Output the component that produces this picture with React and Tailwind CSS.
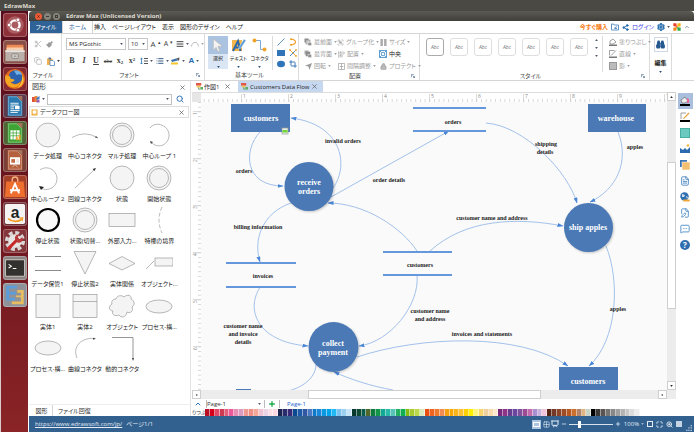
import React from "react";
import { Scissors, Paintbrush, Search, Crop, Lock, Copy, Settings, Share2, AlignJustify, List, FileText, MessageSquareMore, FilePen, Group, AlignStartVertical, Binoculars, ChevronUp, Plus, Minus, Maximize, ZoomIn, Grid2x2, Presentation } from "lucide-react";

function Caret({ className = "text-gray-600" }) {
  return (
    <svg viewBox="0 0 4 3" className={`h-[2px] w-[3px] shrink-0 ${className}`} aria-hidden="true">
      <path d="M0 0h4L2 3z" fill="currentColor" />
    </svg>
  );
}

function Close() {
  return (
    <svg viewBox="0 0 6 6" className="size-[5px]" aria-hidden="true">
      <path d="M.5.5l5 5M5.5.5l-5 5" stroke="#555" strokeWidth=".8" />
    </svg>
  );
}

/* ---------- launcher ---------- */

const tile = "flex size-6 shrink-0 items-center justify-center rounded-[3px] border border-white/25 overflow-hidden";

function DocIcon({ color, children }) {
  return (
    <svg viewBox="0 0 24 24" className="size-[22px]">
      <path d="M4 1h10l6 6v16H4z" fill={color} />
      <path d="M5 2h9l5 5v15H5z" fill="none" stroke="#fff" strokeOpacity=".5" strokeWidth=".7" />
      <path d="M14 1h6v6z" fill="#a9745c" />
      {children}
    </svg>
  );
}

const launcher = [
  ["Dash", "bg-[#8d3038]", (
    <svg viewBox="0 0 24 24" className="size-[22px]">
      <circle cx="12" cy="12" r="9.5" fill="#c8878a" fillOpacity=".5" />
      <circle cx="12" cy="12" r="5" fill="none" stroke="#fff" strokeWidth="2.6" />
      <g fill="#fff" stroke="#a5555a" strokeWidth=".8">
        <circle cx="5.6" cy="12" r="2" />
        <circle cx="15.2" cy="6.4" r="2" />
        <circle cx="15.2" cy="17.6" r="2" />
      </g>
    </svg>
  )],
  ["Files", "bg-[#8a5048]", (
    <svg viewBox="0 0 24 24" className="size-[22px]">
      <path d="M3 4h18l1 8H2z" fill="#ee8a52" />
      <path d="M3 7h18v5H3z" fill="#f6cfae" />
      <path d="M1.500 10h21v12h-21z" fill="#b9b1aa" />
      <path d="M1.500 10h21v2h-21z" fill="#e8e3de" />
      <rect x="8.500" y="14" width="7" height="5" rx="1" fill="#d8d3ce" stroke="#7c756f" strokeWidth=".8" />
      <path d="M10.500 16.500h3" stroke="#777" />
    </svg>
  )],
  ["Firefox", "bg-[#842a30]", (
    <svg viewBox="0 0 24 24" className="size-[22px]">
      <circle cx="12" cy="12" r="11" fill="#e66a1c" />
      <circle cx="12.500" cy="10" r="7.500" fill="#2c62ae" />
      <path d="M11 3c4-1 8 1 9 5-3-2-5-1-6 0-1-2-2-3-3-5z" fill="#6fb1e6" />
      <path d="M2 7c1 1 2 2 5 2-1 2 0 3 2 3 2 0 3 1 2 2-2 2-3 1-4 1 2 4 8 4 10 0 1 5-6 8-11 5C2 18 0 12 2 7z" fill="#f5a623" />
      <path d="M20 8c3 5 1 12-6 14 5-4 6-8 6-14z" fill="#f8c93c" />
    </svg>
  )],
  ["Writer", "bg-[#5d3a4c]", (
    <DocIcon color="#2a7ab0">
      <path d="M7 9h9M7 11h9M7 17h10M7 19h8" stroke="#fff" />
      <rect x="12" y="12" width="5" height="3.500" fill="#fff" />
      <path d="M7 13h4M7 15h4" stroke="#fff" />
    </DocIcon>
  )],
  ["Calc", "bg-[#536338]", (
    <DocIcon color="#3ea535">
      <rect x="7" y="9" width="10" height="10" fill="#fff" />
      <path d="M7 12h10M7 15h10M10 9v10M13.500 9v10" stroke="#3ea535" strokeWidth=".8" />
      <path d="M13 20v-4h2v4zM16 20v-6h2v6z" fill="#f0a030" />
    </DocIcon>
  )],
  ["Impress", "bg-[#7a3f36]", (
    <DocIcon color="#b5603d">
      <rect x="6.500" y="9" width="11" height="8" fill="#fff" />
      <rect x="8" y="11" width="4" height="4" fill="#c36b46" />
      <path d="M13.500 12h3M13.500 14h3M9 20l3-3 3 3" stroke="#e9c8b8" fill="none" />
    </DocIcon>
  )],
  ["Software", "bg-[#a13f28]", (
    <svg viewBox="0 0 24 24" className="size-[22px]">
      <path d="M9 7V4a3 3 0 016 0v3" fill="none" stroke="#f6b183" strokeWidth="1.600" />
      <path d="M2.500 6h19l1.500 17H1z" fill="#ee6e30" />
      <path d="M7.500 19L12 8.500 16.500 19M6.500 15.500h11" fill="none" stroke="#fff" strokeWidth="2" />
    </svg>
  )],
  ["Amazon", "bg-[#713038]", (
    <svg viewBox="0 0 24 24" className="size-[22px]">
      <rect x="1" y="1" width="22" height="22" rx="2" fill="#f4f3f1" />
      <text x="12" y="16" textAnchor="middle" fontSize="17" fontWeight="700" fontFamily="Liberation Sans, sans-serif" fill="#222">a</text>
      <path d="M4.500 17c5 4 11 4 15 .5" fill="none" stroke="#f39a1f" strokeWidth="1.800" />
      <path d="M17 16.500l3.500-.2-.8 3.500" fill="none" stroke="#f39a1f" strokeWidth="1.200" />
    </svg>
  )],
  ["System settings", "bg-[#84363a]", (
    <svg viewBox="0 0 24 24" className="size-[22px]">
      <circle cx="12" cy="12" r="9" fill="none" stroke="#d9d7d5" strokeWidth="4" strokeDasharray="4.200 2.860" />
      <circle cx="12" cy="12" r="7.500" fill="#e6e4e2" />
      <path d="M5 20l8-8" stroke="#c9282a" strokeWidth="3.400" strokeLinecap="round" />
      <path d="M12 10a4 4 0 015-5l-2 3 2 2 3-2a4 4 0 01-6 5z" fill="#b9383a" />
    </svg>
  )],
  ["Terminal", "bg-[#8d8584]", (
    <svg viewBox="0 0 24 24" className="size-[22px]">
      <rect x="1.500" y="3" width="21" height="18" rx="1" fill="#34322f" stroke="#c9c5c0" strokeWidth="1.200" />
      <path d="M5 8l3 2-3 2M9.500 12.500h4" fill="none" stroke="#fff" strokeWidth="1.200" />
    </svg>
  )],
  ["Edraw", "bg-[#8f9298]", (
    <svg viewBox="0 0 24 24" className="size-[22px]">
      <path d="M14 3.500H4v13h8M4 10h9" fill="none" stroke="#5b9ddb" strokeWidth="3" />
      <path d="M14.500 8H20v12.500H8.500" fill="none" stroke="#e8bd62" strokeWidth="3" />
      <path d="M13 13.500h6" fill="none" stroke="#e8bd62" strokeWidth="2" />
    </svg>
  )],
];

function Launcher() {
  return (
    <nav aria-label="Launcher" className="flex w-7 shrink-0 flex-col items-center gap-[3px] border-l border-[#d8cccc] bg-linear-to-b from-[#560d1c] via-[#6d1720] to-[#8a2426] pt-0.5">
      {launcher.map(([name, bg, icon]) => (
        <button key={name} aria-label={name} className={`${tile} ${bg}`}>{icon}</button>
      ))}
    </nav>
  );
}

/* ---------- menu ---------- */

function MenuBar() {
  return (
    <div className="flex h-3 shrink-0 items-stretch bg-white pl-px text-[#222]">
      <button className="w-8 bg-[#2f6296] text-white">ファイル</button>
      <button className="w-[31px] border-x border-[#d5d5d5] text-[#2f6296]">ホーム</button>
      <div className="flex items-center gap-[6px] pl-px">
        {["挿入", "ページレイアウト", "表示", "図形のデザイン", "ヘルプ"].map((t) => (
          <button key={t}>{t}</button>
        ))}
      </div>
      <div className="ml-auto flex items-center gap-[3px] pr-1">
        <a href="#buy" className="font-bold text-[#f57a14]">今すぐ購入</a>
        <button aria-label="Export">
          <svg viewBox="0 0 8 8" className="size-2" fill="none" stroke="#3a7ab8" strokeWidth=".8">
            <path d="M.5 1h2l.7 1H7.500v5h-7zM3 5.500l3-2M4 5.500h2" />
          </svg>
        </button>
        <button aria-label="Share"><Share2 className="size-[7px] fill-[#2b70b0] text-[#2b70b0]" strokeWidth={3} /></button>
        <a href="#login" className="text-[#3c3ce0]">ログイン</a>
        <button aria-label="Options" className="flex items-center gap-0.5">
          <Settings className="size-2 text-[#2b70b0]" strokeWidth={4} />
          <Caret />
        </button>
        <button aria-label="Theme">
          <svg viewBox="0 0 8 8" className="size-2">
            <path d="M.3.300h3L4 4 .3 3z" fill="#e8402f" />
            <path d="M7.700.300v3L4 4 4.700.3z" fill="#f4b41c" />
            <path d="M7.700 7.700h-3L4 4l3.700.7z" fill="#2fa84c" />
            <path d="M.3 7.700v-3L4 4l-.7 3.700z" fill="#f08a1c" />
          </svg>
        </button>
        <button aria-label="Collapse ribbon"><ChevronUp className="size-[6px] text-gray-500" strokeWidth={3} /></button>
      </div>
    </div>
  );
}

/* ---------- ribbon ---------- */

function Section({ label, width, launch, children }) {
  return (
    <section className={`flex shrink-0 flex-col border-r border-[#dcdcdc] ${width}`}>
      <div className="flex flex-1 items-start pt-0.5">{children}</div>
      <div className="flex h-[10px] items-center pr-1 text-[#444]">
        <span className="flex-1 text-center">{label}</span>
        {launch && (
          <button aria-label={`${label}の設定`}>
            <svg viewBox="0 0 5 5" className="size-1" fill="none" stroke="#46678a" strokeWidth=".8"><path d="M.5 4V.500h3M2 2l2.500 2.500M4.500 2.500v2h-2" /></svg>
          </button>
        )}
      </div>
    </section>
  );
}

function FontPicker({ label, width, options }) {
  return (
    <div className={`relative ${width}`}>
      <select aria-label={label} className="block h-3 w-full appearance-none border border-[#c6c6c6] bg-white pl-0.5 text-[6px] leading-[10px] text-[#222]">
        {options.map((o) => <option key={o}>{o}</option>)}
      </select>
      <span className="pointer-events-none absolute right-[3px] top-[5px] flex"><Caret /></span>
    </div>
  );
}

function StackIcon({ filled }) {
  return (
    <svg viewBox="0 0 8 8" className="size-2">
      <rect x=".5" y=".5" width="4" height="4" fill={filled ? "#aaa" : "#8d8d8d"} />
      <rect x="2" y="2" width="4" height="4" fill={filled ? "#8d8d8d" : "#ccc"} stroke="#8d8d8d" strokeWidth=".6" />
      <rect x="4" y="4.500" width="3.500" height="3" fill="#8d8d8d" stroke="#fff" strokeWidth=".4" />
    </svg>
  );
}

function Row({ icon, label, caret = true, className = "text-[#9a9a9a]" }) {
  return (
    <button className={`flex h-3 items-center gap-0.5 whitespace-nowrap ${className}`}>
      <span className="flex w-2 justify-center">{icon}</span>
      <span>{label}</span>
      {caret && <Caret className="text-[#a0a0a0]" />}
    </button>
  );
}

function BigTool({ label, active, children }) {
  return (
    <button className={`flex h-[33px] flex-col items-center ${active ? "w-5 bg-[#dbe6f4]" : "w-[21px]"}`}>
      <span className={`flex h-[18px] w-full items-center justify-center ${active ? "bg-[#a9c3e0]" : ""}`}>{children}</span>
      <span className="whitespace-nowrap text-[5px] leading-2 text-[#222]">{label}</span>
      <span className="flex pt-1"><Caret className="text-[#2b4d78]" /></span>
    </button>
  );
}

function FileGroup() {
  return (
    <Section label="ファイル" width="w-[33px]">
      <div className="grid grid-cols-[12px_14px] items-center gap-y-[5px] pl-[5px] pt-0.5">
        <button aria-label="切り取り" className="flex h-3 items-center"><Scissors className="size-2 text-[#aaa]" /></button>
        <button aria-label="書式コピー" className="flex h-3 items-center"><Paintbrush className="size-[7px] fill-[#999] text-[#999]" /></button>
        <button aria-label="コピー" className="flex h-3 items-center"><Copy className="size-2 text-[#aaa]" /></button>
        <button aria-label="貼り付け" className="flex h-3 items-center gap-0.5">
          <svg viewBox="0 0 9 9" className="size-[9px]">
            <rect x="1" y="1.500" width="5.500" height="6.500" fill="#f3b24f" /><rect x="2.500" y=".5" width="2.500" height="2" fill="#58779c" />
            <path d="M4 3.500h3l1.500 1.500v3.500H4z" fill="#fff" stroke="#3a78b8" strokeWidth=".7" />
          </svg>
          <Caret className="text-[#333]" />
        </button>
      </div>
    </Section>
  );
}

function FontGroup() {
  const cell = "flex h-3 items-center justify-center gap-0.5";
  return (
    <Section label="フォント" width="w-[143px]" launch>
      <div className="flex w-full flex-col gap-[5px] pl-1 pt-0.5">
        <div className="flex items-center gap-0.5">
          <FontPicker label="フォント" width="w-[60px]" options={["MS PGothic", "Arial"]} />
          <FontPicker label="サイズ" width="w-5" options={["10", "12"]} />
          <button aria-label="拡大" className={`${cell} w-[11px] text-[8px] text-[#444]`}>A<sup className="text-[5px]">▴</sup></button>
          <button aria-label="縮小" className={`${cell} w-[11px] text-[7px] text-[#444]`}>A<sup className="text-[5px]">▾</sup></button>
          <button aria-label="配置" className={`${cell} w-[13px]`}><AlignJustify className="size-2 text-[#444]" strokeWidth={3} /><Caret /></button>
          <button aria-label="円弧" className={`${cell} w-[13px]`}>
            <svg viewBox="0 0 8 6" className="h-[6px] w-2"><path d="M.5 5.500C1 0 7 0 7.500 5.500" fill="none" stroke="#aaa" strokeWidth=".8" /></svg>
            <Caret className="text-[#aaa]" />
          </button>
        </div>
        <div className="flex items-center font-['Liberation_Serif',serif] text-[8px] text-[#444]">
          <button className={`${cell} w-3 font-bold`}>B</button>
          <button className={`${cell} w-3 font-bold italic`}>I</button>
          <button className={`${cell} w-3 font-bold underline`}>U</button>
          <button className={`${cell} w-3 text-[6px] line-through`}>abc</button>
          <button className={`${cell} w-3 font-bold`}><span className="leading-2">x<sub className="text-[5px]">2</sub></span></button>
          <button className={`${cell} w-3 font-bold`}><span className="leading-2">x<sup className="text-[5px]">2</sup></span></button>
          <button aria-label="行間" className={`${cell} w-4`}>
            <svg viewBox="0 0 8 8" className="size-2"><path d="M1.500 1v6M.3 2.200L1.500 1l1.200 1.200M.3 5.800L1.500 7l1.200-1.200" fill="none" stroke="#2f76b8" strokeWidth=".8" /><path d="M4 1.500h4M4 4h4M4 6.500h4" stroke="#555" /></svg>
            <Caret />
          </button>
          <button aria-label="箇条書き" className={`${cell} w-4`}><List className="size-2 text-[#3a5d86]" strokeWidth={3} /><Caret /></button>
          <button aria-label="蛍光ペン" className={`${cell} w-4`}>
            <svg viewBox="0 0 9 8" className="h-2 w-[9px]"><path d="M0 3l5-1.500 2 2L1 5z" fill="#3c74ad" /><path d="M5 1.500L8.500.5 8 4z" fill="#555" /><path d="M0 5.500h7v2H0z" fill="#f5c62c" /></svg>
            <Caret />
          </button>
          <button aria-label="文字色" className={`${cell} w-4 font-['Liberation_Sans',sans-serif] font-bold text-[#2a6bb0]`}>A<Caret /></button>
        </div>
      </div>
    </Section>
  );
}

function ToolGroup() {
  return (
    <Section label="基本ツール" width="w-[94px]">
      <div className="flex pl-[3px]">
        <BigTool label="選択" active>
          <svg viewBox="0 0 12 16" className="h-[15px] w-3"><path d="M1 1v12l3-3 2 5 2-1-2-5h5z" fill="#f2f2f2" stroke="#b9b9b9" strokeWidth=".8" /></svg>
        </BigTool>
        <BigTool label="テキスト">
          <svg viewBox="0 0 15 14" className="h-[14px] w-[15px]">
            <rect x="1" y="2" width="10" height="11" fill="#f2b64c" />
            <path d="M2 13L7 3l2.500 10M4 9.500h4.500" fill="none" stroke="#2d6aa8" strokeWidth="2" />
            <path d="M8 9l5-8 2 1.500-5 7.500-2.500 1z" fill="#5b9bd5" stroke="#fff" strokeWidth=".4" />
          </svg>
        </BigTool>
        <BigTool label="コネクタ">
          <svg viewBox="0 0 15 14" className="h-[14px] w-[15px]">
            <path d="M2.500 2.500h6v9h4" fill="none" stroke="#7aa7d9" />
            <circle cx="2.500" cy="2.500" r="2" fill="#f2a32b" /><circle cx="12.500" cy="11.500" r="2" fill="#f2a32b" />
          </svg>
        </BigTool>
      </div>
      <div className="ml-0.5 grid h-[34px] grid-cols-2 items-center gap-x-1 border-l border-[#dcdcdc] pl-[4px]">
        <button aria-label="線"><svg viewBox="0 0 8 8" className="size-2"><path d="M.5 7.500l7-7" stroke="#4a87c4" strokeWidth=".9" /></svg></button>
        <button aria-label="円弧"><svg viewBox="0 0 8 8" className="size-2"><path d="M2 1c6 1 6 5 0 6" fill="none" stroke="#f0a02a" strokeWidth="1.200" /><circle cx="2" cy="1.200" r="1" fill="#f0a02a" /><circle cx="2" cy="6.800" r="1" fill="#f0a02a" /></svg></button>
        <button aria-label="長方形"><svg viewBox="0 0 8 8" className="size-2"><rect y="1" width="8" height="6" fill="#2f74b8" /></svg></button>
        <button aria-label="接続点"><svg viewBox="0 0 8 8" className="size-2"><path d="M1 1l6 6" stroke="#f0a02a" /><path d="M7 1L1 7" stroke="#4a87c4" /><circle cx="1" cy="1" r=".9" fill="#f0a02a" /><circle cx="7" cy="7" r=".9" fill="#f0a02a" /><circle cx="7" cy="1" r=".9" fill="#f0a02a" /></svg></button>
        <button aria-label="楕円"><svg viewBox="0 0 8 8" className="size-2"><ellipse cx="4" cy="4" rx="4" ry="3.200" fill="#2f74b8" /></svg></button>
        <button aria-label="トリミング"><Crop className="size-2 text-[#3a78b8]" strokeWidth={3} /></button>
      </div>
    </Section>
  );
}

function ArrangeGroup() {
  const s = "size-[7px]";
  return (
    <Section label="配置" width="w-[121px]" launch>
      <div className="flex w-full pl-[5px]">
        <div className="flex w-9 flex-col">
          <Row icon={<StackIcon />} label="最前面" />
          <Row icon={<StackIcon filled />} label="最背面" />
          <Row icon={<svg viewBox="0 0 8 8" className={s}><path d="M0 3l8-3-3 8-1-4z" fill="#999" /></svg>} label="回転" />
        </div>
        <div className="flex w-[42px] flex-col">
          <Row icon={<Group className={s} />} label="グループ化" />
          <Row icon={<AlignStartVertical className={s} />} label="配置" />
          <Row icon={<svg viewBox="0 0 8 8" className={s} fill="none" stroke="#999" strokeWidth=".8"><path d="M.5.500h7v7h-7zM4 .5v7M2 4h4" /></svg>} label="間隔調整" />
        </div>
        <div className="flex flex-col">
          <Row icon={<svg viewBox="0 0 8 8" className={s}><path d="M.5 0h2.800v8H.500zM4.700 0h2.800v8H4.700z" fill="#aaa" /></svg>} label="サイズ" />
          <Row className="text-[#222]" caret={false} icon={<svg viewBox="0 0 8 8" className="size-2" fill="none" stroke="#3a86c8" strokeWidth=".8"><path d="M.5.500h7v7h-7z" /><circle cx="4" cy="4" r="1.800" /><path d="M.5.500l2 2M7.500.500l-2 2M.5 7.500l2-2M7.500 7.500l-2-2" /></svg>} label="中央" />
          <Row icon={<Lock className="size-[7px] fill-[#bbb]" />} label="プロテクト" />
        </div>
      </div>
    </Section>
  );
}

function StyleGroup() {
  return (
    <Section label="スタイル" width="w-[230px]" launch>
      <div className="flex gap-[6px] pl-[6px] pt-0.5">
        {[0, 1, 2, 3, 4, 5, 6].map((i) => (
          <button key={i} className={`size-[18px] rounded-[3px] border bg-white text-[5px] italic text-[#777] ${i === 0 ? "border-[#aaa]" : "border-[#dedede]"}`}>Abc</button>
        ))}
      </div>
      <div className="flex h-6 flex-col items-center justify-around pl-[7px]">
        <button aria-label="前へ" className="flex rotate-180"><Caret /></button>
        <button aria-label="次へ" className="flex"><Caret /></button>
        <button aria-label="その他" className="flex"><Caret /></button>
      </div>
      <div className="ml-1 flex flex-col border-l border-[#dcdcdc] pl-[6px]">
        <Row icon={<svg viewBox="0 0 8 8" className="size-2"><path d="M1 3l3-2 3 3-3 2H1z" fill="none" stroke="#888" strokeWidth=".8" /><path d="M0 6.500h8v1.500H0z" fill="#777" /></svg>} label="塗りつぶし" />
        <Row icon={<svg viewBox="0 0 8 8" className="size-2"><path d="M.5.500h5M.5.500v5M2 5.500L7 .5" fill="none" stroke="#888" strokeWidth=".8" /><path d="M0 6.500h8v1.500H0z" fill="#777" /></svg>} label="直線" />
        <Row icon={<svg viewBox="0 0 8 8" className="size-2"><rect x=".5" y=".5" width="7" height="7" fill="#bbb" stroke="#999" /></svg>} label="影" />
      </div>
    </Section>
  );
}

function Ribbon() {
  return (
    <div className="flex h-12 shrink-0 border-y border-[#d5d5d5] bg-white">
      <FileGroup />
      <FontGroup />
      <ToolGroup />
      <ArrangeGroup />
      <StyleGroup />
      <div className="flex w-[22px] shrink-0 flex-col items-center border-r border-[#dcdcdc] pt-[3px]">
        <button className="flex flex-col items-center font-bold text-[#222]">
          <span className="flex h-[15px] w-[14px] items-center justify-center border border-[#d0d8e4]">
            <Binoculars className="size-[9px] fill-[#24588f] text-[#24588f]" strokeWidth={3} />
          </span>
          <span className="pt-[7px] leading-2">編集</span>
          <span className="flex pt-1"><Caret className="text-[#2b4d78]" /></span>
        </button>
      </div>
    </div>
  );
}

/* ---------- shape library ---------- */

const g = { fill: "#f4f4f4", stroke: "#8a8a8a", strokeWidth: 0.6 };
const n = { fill: "none", stroke: "#8a8a8a", strokeWidth: 0.6 };
const shapes = [
  ["データ処理", <circle cx="14" cy="13" r="12" {...g} />],
  ["中心コネクタ", <g><path d="M1 15.500Q14 8 27 16" {...n} /><path d="M27 16l-3-.5 1-1.500z" fill="#444" /></g>],
  ["マルチ処理", <g><circle cx="14" cy="13" r="12" {...g} /><circle cx="14" cy="13" r="9.500" {...g} /></g>],
  ["中心ループ 1", <g><path d="M5 6C11-2 25 4 24 14 23 24 12 27 6 20" {...n} /><path d="M5 19l3 1-2 2z" fill="#444" /></g>],
  ["中心ループ 2", <g><path d="M6 5c6-5 17-1 17 9 0 9-11 13-16 9" {...n} /><path d="M5 21l5 1-3 3z" fill="#222" /></g>],
  ["回線コネクタ", <g><path d="M4 23L24 4" {...n} /><path d="M25 3l-3.500 1 2 2z" fill="#333" /></g>],
  ["状態", <circle cx="14" cy="13" r="12" {...g} />],
  ["開始状態", <g><circle cx="14" cy="13" r="12" {...g} /><circle cx="14" cy="13" r="9.500" {...g} /></g>],
  ["停止状態", <circle cx="14" cy="13" r="11" fill="#f8f8f8" stroke="#000" strokeWidth="2.200" />],
  ["状態(切替...", <g><circle cx="14" cy="13" r="12" {...g} /><circle cx="14" cy="13" r="9.500" {...g} /></g>],
  ["外部入力...", <rect x="1" y="6.500" width="26" height="13" {...g} />],
  ["特権の境界", <path d="M17 0q-6 13 0 26" {...n} strokeDasharray="4 2" />],
  ["データ保管1", <path d="M1 6.500h26M1 20.500h26" {...n} strokeWidth="1" />],
  ["停止状態2", <path d="M3 1.500h22L14 24z" {...g} />],
  ["実体関係", <path d="M14 6.500L27 13.500 14 20 1 13.500z" {...g} />],
  ["オブジェクト...", <g><path d="M1 19l8-8" {...n} /><rect x="10" y="8" width="18" height="8" {...g} /></g>],
  ["実体1", <rect x="2" y="1.500" width="24" height="23" {...g} />],
  ["実体2", <g><rect x="2" y="1.500" width="24" height="23" {...g} /><path d="M2 8.500h24" {...n} /></g>],
  ["オブジェクト", <path d="M8 6c1-4 6-4 8-2 3-3 8-2 7 2 4 2 4 6 1 8 2 4-2 7-5 5-1 6-6 6-8 3-4 2-8-1-6-4-4 0-5-5-1-7-1-3 1-5 4-5z" {...g} />],
  ["プロセス-構...", <ellipse cx="14" cy="13.500" rx="13" ry="6.500" {...g} />],
  ["プロセス-構...", <ellipse cx="14" cy="13" rx="13" ry="7" {...g} />],
  ["曲線コネクタ", <g><path d="M6 23C1 11 11 2 24 3.500" {...n} /><path d="M25 3.700l-3-1v2z" fill="#444" /></g>],
  ["動的コネクタ", <g><path d="M4 2.500h21v22" {...n} strokeWidth=".9" /><path d="M25 26l-1-3h2z" fill="#444" /></g>],
];

function ShapePanel() {
  return (
    <aside className="flex w-[162px] shrink-0 flex-col border-r border-[#e2e2e2] bg-white text-[#333]">
      <div className="flex h-3 shrink-0 items-center justify-between pl-[3px] pr-[5px] text-[7px]">
        <h2>図形</h2>
        <button aria-label="閉じる"><Close /></button>
      </div>
      <div className="flex h-3 shrink-0 items-center gap-0.5 pl-[3px] pr-1">
        <button aria-label="ライブラリ" className="flex w-[13px] items-center gap-0.5">
          <svg viewBox="0 0 8 8" className="size-2"><path d="M0 2h3v5H0z" fill="#e2503b" /><path d="M2.500 1h3v6h-3z" fill="#e98a3b" /><path d="M4.500 3L7.500 1v3L4.500 5z" fill="#3a78c8" /><path d="M4.500 5.500l3-1v3h-3z" fill="#9a59b0" /></svg>
          <Caret />
        </button>
        <div className="relative flex-1">
          <input aria-label="図形の検索" className="block h-[11px] w-full border border-[#c2c2c2] px-0.5 text-[6px]" />
          <span className="pointer-events-none absolute right-[3px] top-1 flex"><Caret /></span>
        </div>
        <button aria-label="検索" className="flex w-3 justify-center"><Search className="size-2 text-[#3a78b8]" strokeWidth={3} /></button>
      </div>
      <div className="mr-px mt-px flex h-3 shrink-0 items-center gap-0.5 border border-[#dedede] pl-px pr-1">
        <svg viewBox="0 0 8 8" className="size-[7px]"><rect x=".5" y=".5" width="7" height="7" fill="#f0b44c" /><circle cx="4" cy="3.500" r="2.200" fill="#fff" /></svg>
        <h3 className="flex-1">データフロー図</h3>
        <button aria-label="ライブラリを閉じる"><Close /></button>
      </div>
      <div className="grid h-64 shrink-0 grid-cols-4 grid-rows-6 pr-3">
        {shapes.map(([name, art], i) => (
          <button key={i} className="flex flex-col items-center pt-1">
            <svg viewBox="0 0 28 26" className="h-[26px] w-7 shrink-0">{art}</svg>
            <span className="mt-1 whitespace-nowrap leading-2 text-[#222]">{name}</span>
          </button>
        ))}
      </div>
      <div className="mt-auto flex h-3 shrink-0 items-stretch gap-[5px] border-t border-[#eee] pl-0.5">
        <button className="w-[22px] border-r border-[#d5d5d5]">図形</button>
        <button>ファイル回復</button>
      </div>
    </aside>
  );
}

/* ---------- drawing ---------- */

const PITCH = 47;

function HRuler() {
  return (
    <svg className="block h-[9px] min-w-0 flex-1 bg-white" aria-hidden="true">
      <defs>
        <pattern id="hticks" width="4.700" height="9" patternUnits="userSpaceOnUse" patternTransform="translate(-2 0)">
          <path d="M.5 6v3" stroke="#bbb" strokeWidth=".6" />
        </pattern>
      </defs>
      <rect width="100%" height="9" fill="url(#hticks)" />
      {[1, 2, 3, 4, 5, 6, 7, 8, 9, 10].map((k) => (
        <g key={k} transform={`translate(${40 + (k - 1) * PITCH} 0)`}>
          <path d="M.5 1v8" stroke="#ccc" strokeWidth=".7" />
          <text x="2" y="5" className="fill-[#888] text-[5px]">{k}</text>
        </g>
      ))}
    </svg>
  );
}

function VRuler() {
  return (
    <svg className="block w-[9px] shrink-0 bg-white" aria-hidden="true">
      <defs>
        <pattern id="vticks" width="9" height="4.700" patternUnits="userSpaceOnUse">
          <path d="M6 .5h3" stroke="#bbb" strokeWidth=".6" />
        </pattern>
      </defs>
      <rect width="9" height="100%" fill="url(#vticks)" />
      {[1, 2, 3, 4, 5, 6].map((k) => (
        <g key={k} transform={`translate(0 ${9 + (k - 1) * PITCH})`}>
          <path d="M1 .5h8" stroke="#ccc" strokeWidth=".7" />
          <text transform="translate(5 4) rotate(-90)" className="fill-[#888] text-[5px]">{k}</text>
        </g>
      ))}
    </svg>
  );
}

const links = [
  "M260 132C243 150 244 186 283 186",
  "M333 188C350 164 341 124 291 118",
  "M331 197L449 131",
  "M486 123C525 126 568 172 577 203",
  "M618 132C630 162 616 190 590 202",
  "M291 203C262 213 253 240 260 262",
  "M417 251C402 228 365 203 328 203",
  "M430 251C465 219 516 217 563 226",
  "M261 286C245 308 256 342 308 346",
  "M417 275C420 305 390 342 359 346",
  "M357 357C420 336 520 332 568 366",
  "M393 390C370 386 350 379 334 372",
  "M606 246C620 280 618 340 589 366",
];

const labels = [
  [244, 173, "orders"], [343, 143, "invalid orders"], [389, 182, "order details"],
  [453, 124, "orders"], [546, 146, "shipping"], [545, 154, "details"], [635, 149, "apples"],
  [492, 220, "customer name and address"], [258, 229, "billing information"],
  [263, 278, "invoices"], [420, 267, "customers"],
  [430, 313, "customer name"], [430, 321, "and address"],
  [482, 336, "invoices and statements"], [618, 311, "apples"],
  [243, 328, "customer name"], [243, 336, "and invoice"], [243, 344, "details"],
  [297, 394, "debit and default"],
];

function Diagram() {
  return (
    <svg className="block h-full w-full bg-[#fafafa]" role="img" aria-label="Customers Data Flow">
      <defs>
        <marker id="arrow" viewBox="0 0 6 4" refX="5.500" refY="2" markerWidth="6" markerHeight="4" orient="auto" markerUnits="userSpaceOnUse">
          <path d="M0 0l6 2-6 2z" fill="#4a86d6" />
        </marker>
      </defs>
      <g transform="translate(-201 -102)" className="font-['Liberation_Serif',serif]">
        <g fill="none" stroke="#a3c1ea">
          {links.map((d) => <path key={d} d={d} markerEnd="url(#arrow)" />)}
          <path d="M316 365C315 380 300 388 288 391" />
        </g>
        <g stroke="#6497db" strokeWidth="2">
          <path d="M413 108h73M413 131h73M226 263h70M226 287h70M383 252h69M383 275h69" />
        </g>
        <g className="fill-[#4a79b5]">
          <rect x="231" y="104" width="59" height="28" />
          <rect x="588" y="104" width="58" height="28" />
          <rect x="559" y="367" width="59" height="28" />
          <rect x="236" y="389" width="15" height="6" />
          <g className="drop-shadow-[1px_1px_1px_rgba(0,0,0,0.2)]">
            <circle cx="309" cy="186.500" r="24.500" />
            <circle cx="588.500" cy="227.500" r="24.500" />
            <circle cx="333.500" cy="347" r="25" />
          </g>
        </g>
        <rect x="282" y="128" width="6" height="6" fill="#e8efe4" stroke="#999" strokeWidth=".7" />
        <rect x="282.500" y="130" width="5" height="2.500" fill="#72d838" />
        <g textAnchor="middle" className="fill-white text-[8px] font-bold">
          <text x="261" y="121">customers</text>
          <text x="616" y="121">warehouse</text>
          <text x="588" y="384">customers</text>
          <text x="309" y="185">receive</text>
          <text x="309" y="194">orders</text>
          <text x="588" y="230">ship apples</text>
          <text x="333" y="346">collect</text>
          <text x="333" y="355">payment</text>
        </g>
        <g textAnchor="middle" className="fill-[#222] text-[6px] font-bold">
          {labels.map(([x, y, t]) => <text key={`${x}-${y}`} x={x} y={y}>{t}</text>)}
        </g>
      </g>
    </svg>
  );
}

function ScrollButton({ label, turn = "" }) {
  return (
    <button aria-label={label} className="flex size-[9px] shrink-0 items-center justify-center border border-[#cfcfcf] bg-white">
      <span className={`flex ${turn}`}><Caret className="text-[#333]" /></span>
    </button>
  );
}

function TabIcon() {
  return (
    <svg viewBox="0 0 8 8" className="size-[7px]"><rect width="6" height="3" fill="#e2574a" /><rect x="1" y="3" width="4" height="2" fill="#f3c04a" /><path d="M3 5v2h2" stroke="#5a9a5a" fill="none" /><rect x="5" y="4.500" width="3" height="3" fill="#5cae62" /></svg>
  );
}

const palette = "#b80f26 #d6001c #e2496b #cf3a50 #e4607c #ec5a9c #e38fb6 #dc9cc0 #ee9a90 #ef8f86 #f4a89a #eec3d4 #ecd3e6 #fbdde4 #fcd9e2 #1c2350 #2a2c6e #392a78 #0b4a90 #1d5aa8 #3158a0 #4a7ac4 #0b78c8 #1a86d8 #0a98e0 #00a4ec #22b8f4 #7cc0ec #9cd0f0 #c8e4f6 #07382e #0c4a34 #0a5c4c #50682c #0b7c3e #129648 #12a898 #2ab8a8 #58c4b8 #22b060 #10b050 #84bc10 #a8cc30 #bcd84c #dce8c0 #e84e10 #ee6420 #f07a2c #f28c50 #f4a010 #f8a800 #fab41c #fcc030 #fcd000 #fff000 #fff47c #f8d470 #ecd0a0 #f8dcb0 #fce8cc #78287c #8c3488 #663c90 #6a46a0 #80509c #9c4c94 #c06cac #a890d0 #c8b0dc #f0c4dc #582414 #743828 #8c4428 #a04c24 #b85820 #cc7030 #b48468 #e0b480 #c8d4c8 #000000 #3c3838 #585454 #747474 #888888 #a0a0a0 #b4b4b4 #c8c8c8 #dcdcdc #ececec".split(" ");

function Workspace() {
  return (
    <main className="flex min-w-0 flex-1 flex-col bg-white pl-px">
      <div className="flex h-[11px] shrink-0 items-stretch text-[#333]">
        <div className="flex w-[42px] items-center gap-px pl-1">
          <TabIcon /><button className="flex-1 text-left">作図1</button><button aria-label="作図1を閉じる" className="pr-1"><Close /></button>
        </div>
        <div className="ml-1 flex items-center gap-0.5 bg-[#c6d7f0] px-[3px] text-[#222]">
          <TabIcon /><button className="pr-px">Customers Data Flow</button><button aria-label="Customers Data Flowを閉じる" className="pr-[3px]"><Close /></button>
        </div>
      </div>
      <div className="flex min-h-0 flex-1">
        <div className="flex min-w-0 flex-1 flex-col">
          <div className="flex shrink-0 border-t border-[#ddd]">
            <div className="size-[9px] shrink-0 bg-[#e6e6e6]" />
            <HRuler />
          </div>
          <div className="flex min-h-0 flex-1">
            <VRuler />
            <div className="min-w-0 flex-1 overflow-hidden"><Diagram /></div>
          </div>
        </div>
        <div className="flex w-[9px] shrink-0 flex-col bg-[#ececec]">
          <ScrollButton label="上へ" turn="rotate-180" />
          <div className="flex-61" />
          <div className="flex-146 border border-[#cfcfcf] bg-white" />
          <div className="flex-73" />
          <ScrollButton label="下へ" />
        </div>
      </div>
      <div className="flex h-[9px] shrink-0 bg-[#ececec] pr-[9px]">
        <ScrollButton label="左へ" turn="rotate-90" />
        <div className="flex-108" />
        <div className="flex-232 border border-[#cfcfcf] bg-white" />
        <div className="flex-118" />
        <ScrollButton label="右へ" turn="-rotate-90" />
      </div>
      <div className="flex h-[10px] shrink-0 items-center text-[#333]">
        <button aria-label="ページ一覧" className="w-[14px] pl-0.5"><ChevronUp className="size-2 text-[#2f74b8]" strokeWidth={3} /></button>
        <div className="relative w-[59px] border-x border-[#bbb]">
          <select aria-label="ページ" className="block h-2 w-full appearance-none bg-white text-[6px] leading-2"><option>Page-1</option></select>
          <span className="pointer-events-none absolute right-[3px] top-[3px] flex"><Caret /></span>
        </div>
        <button aria-label="ページを追加" className="flex w-[15px] justify-center border-r border-[#bbb]"><Plus className="size-2 text-[#1fa84c]" strokeWidth={4} /></button>
        <button className="pl-[7px] text-[#2a62d0]">Page-1</button>
      </div>
      <div className="flex h-[7px] shrink-0 overflow-hidden">
        <span className="w-[13px] shrink-0 overflow-hidden whitespace-nowrap text-[5px] leading-[7px] text-[#333]">りつぶ</span>
        <div className="flex w-[435px]">
          {palette.map((c, i) => (
            <button key={i} aria-label={c} className="flex-1 border-r border-white/50" style={{ backgroundColor: c }} />
          ))}
        </div>
      </div>
    </main>
  );
}

function SideTools() {
  const b = "flex h-4 w-[15px] items-center justify-center";
  return (
    <div className="flex w-[18px] shrink-0 flex-col items-center bg-white pt-3">
      <button aria-label="塗りつぶし" className={`${b} bg-[#a9bfdd]`}>
        <svg viewBox="0 0 10 10" className="size-[10px]"><path d="M1 4l4-3 3 4-3 2H2z" fill="#eee" stroke="#666" strokeWidth=".7" /><path d="M7 2l2 1v4H7z" fill="#e86a9a" /><path d="M0 8h10v2H0z" fill="#000" /></svg>
      </button>
      <button aria-label="線" className={b}>
        <svg viewBox="0 0 10 10" className="size-[10px]"><path d="M1 7V1h5" fill="none" stroke="#777" strokeWidth=".7" /><path d="M3 6.500L8.500.5l1 1L4 7z" fill="#e8a640" /><path d="M0 8h10v2H0z" fill="#000" /></svg>
      </button>
      <button aria-label="影" className={b}><span className="size-[10px] border border-[#48b0a4] bg-[#6cc9be]" /></button>
      <button aria-label="画像" className={b}>
        <svg viewBox="0 0 10 10" className="size-[10px]"><path d="M0 4l3 2 2-2 2 2 3-3v6H0z" fill="#2b6aae" /><circle cx="8" cy="1.500" r="1.300" fill="#f5b63c" /></svg>
      </button>
      <button aria-label="レイヤー" className={b}>
        <svg viewBox="0 0 10 10" className="size-[10px]"><rect width="7" height="7" fill="#3a76b6" /><rect x="2" y="2" width="8" height="8" fill="#f2c070" stroke="#fff" strokeWidth=".5" /></svg>
      </button>
      <button aria-label="ページ" className={b}><FileText className="size-[10px] text-[#3a78b8]" strokeWidth={2} /></button>
      <button aria-label="リンク" className={b}>
        <svg viewBox="0 0 10 10" className="size-[10px]"><circle cx="4.500" cy="4.500" r="4.200" fill="#2f6fb0" /><path d="M2 2l3 1-1 2-2 0zM6 4l2 1-1 2z" fill="#cfe0f2" /><path d="M4 8.500h5" stroke="#f0a83c" strokeWidth="1.800" strokeLinecap="round" /></svg>
      </button>
      <button aria-label="添付" className={b}><FilePen className="size-[10px] text-[#3f83c0]" strokeWidth={2} /></button>
      <button aria-label="コメント" className={b}><MessageSquareMore className="size-[10px] text-[#3f83c0]" strokeWidth={2} /></button>
      <button aria-label="ヘルプ" className={b}>
        <span className="flex size-[10px] items-center justify-center rounded-full bg-[#2f6fb0] text-[8px] font-bold leading-none text-white">?</span>
      </button>
    </div>
  );
}

function StatusBar() {
  return (
    <footer className="flex h-4 shrink-0 items-center bg-[#32618f] pl-[6px] pr-0.5 text-[#e4edf6]">
      <a href="https://www.edrawsoft.com/jp/" className="underline">https://www.edrawsoft.com/jp/</a>
      <span className="pl-1">ページ1/1</span>
      <div className="ml-auto flex items-center">
        <button aria-label="標準表示" className="flex size-[9px] items-center justify-center bg-[#aac6e2]"><span className="h-[5px] w-[7px] border border-white" /></button>
        <button aria-label="ページ表示" className="flex w-[10px] justify-center"><Grid2x2 className="size-[7px]" /></button>
        <button aria-label="プレゼンテーション" className="flex w-2 justify-center"><Presentation className="size-2" strokeWidth={3} /></button>
        <button aria-label="縮小" className="flex w-[10px] justify-center"><Minus className="size-[6px]" strokeWidth={3} /></button>
        <input aria-label="ズーム" type="range" min="0" max="100" defaultValue="22" className="h-2 w-[44px] appearance-none bg-transparent [&::-webkit-slider-runnable-track]:h-px [&::-webkit-slider-runnable-track]:bg-[#d8e3ee] [&::-webkit-slider-thumb]:-mt-[3px] [&::-webkit-slider-thumb]:h-[7px] [&::-webkit-slider-thumb]:w-[3px] [&::-webkit-slider-thumb]:appearance-none [&::-webkit-slider-thumb]:bg-white" />
        <button aria-label="拡大" className="flex w-[10px] justify-center"><Plus className="size-[6px]" strokeWidth={3} /></button>
        <button className="flex w-[22px] items-center justify-center gap-0.5">100%<Caret className="text-[#9cb6d0]" /></button>
        <div className="flex items-center gap-[3px] pl-0.5">
          <button aria-label="全体"><span className="block size-[6px] border border-[#e4edf6]" /></button>
          <button aria-label="幅に合わせる"><Maximize className="size-[7px]" strokeWidth={3} /></button>
          <button aria-label="拡大鏡"><ZoomIn className="size-[7px]" strokeWidth={3} /></button>
          <button aria-label="全画面"><span className="block size-[6px] bg-[#c4d4e4]" /></button>
        </div>
        <svg viewBox="0 0 6 6" className="ml-1 mt-2 size-[6px]" fill="#a9c0d8"><path d="M4.500 0H6v1.200H4.500zM2.200 2.300h1.500v1.200H2.200zM4.500 2.300H6v1.200H4.500zM0 4.700h1.500V6H0zM2.200 4.700h1.500V6H2.200zM4.500 4.700H6V6H4.500z" /></svg>
      </div>
    </footer>
  );
}

export default function App() {
  return (
    <div lang="ja" className="flex h-screen flex-col overflow-hidden bg-white font-['Open_Sans','Noto_Sans_CJK_JP',sans-serif] text-[6px] leading-[8px] [font-feature-settings:'palt']">
      <header className="flex h-[11px] shrink-0 items-center bg-[#4a4943] pl-1 font-['Noto_Sans',sans-serif] font-bold text-[#dfdbd2]">EdrawMax</header>
      <div className="flex min-h-0 flex-1">
        <Launcher />
        <div className="flex min-w-0 flex-1 flex-col pl-px">
          <div className="flex h-[10px] shrink-0 items-center rounded-t-sm bg-linear-to-b from-[#5b5a53] to-[#403f3a] pl-1.5 font-['Noto_Sans',sans-serif] font-bold text-[#dfdbd2]">
            <div className="flex gap-0.5">
              <button aria-label="Close" className="flex size-[7px] items-center justify-center rounded-full bg-[#ee5b35]">
                <svg viewBox="0 0 4 4" className="size-[3px]"><path d="M.5.500l3 3M3.500.500l-3 3" stroke="#5b2010" /></svg>
              </button>
              <button aria-label="Minimize" className="flex size-[7px] items-center justify-center rounded-full bg-[#85837a]"><span className="h-px w-[3px] bg-[#3c3b37]" /></button>
              <button aria-label="Maximize" className="flex size-[7px] items-center justify-center rounded-full bg-[#85837a]"><span className="size-[3px] border border-[#3c3b37]" /></button>
            </div>
            <h1 className="pl-1.5">Edraw Max (Unlicensed Version)</h1>
          </div>
          <MenuBar />
          <Ribbon />
          <div className="flex min-h-0 flex-1">
            <ShapePanel />
            <Workspace />
            <SideTools />
          </div>
          <StatusBar />
        </div>
      </div>
    </div>
  );
}
